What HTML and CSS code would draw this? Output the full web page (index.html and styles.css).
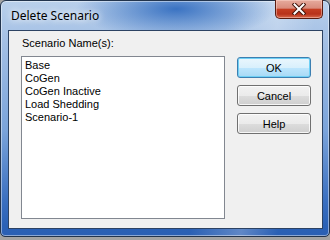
FILE: index.html
```html
<!DOCTYPE html>
<html lang="en">
<head>
  <meta charset="UTF-8" />
  <title>Delete Scenario</title>
  <link rel="stylesheet" href="styles.css">
</head>
<body>

  <!-- Janela do dialogo -->
  <div class="window">
    <div class="titlebar">
      <span class="title">Delete Scenario</span>
      <button class="close" type="button">
        <svg width="14" height="12" viewBox="0 0 14 12">
          <path d="M2.5 1.5 L11.5 10.5 M11.5 1.5 L2.5 10.5" stroke="#43150c" stroke-width="4" stroke-linecap="square" fill="none"/>
          <path d="M2.5 1.5 L11.5 10.5 M11.5 1.5 L2.5 10.5" stroke="#fff" stroke-width="2" stroke-linecap="square" fill="none"/>
        </svg>
      </button>
    </div>

    <div class="client">
      <div class="list-col">
        <label class="caption">Scenario Name(s):</label>
        <ul class="listbox">
          <li>Base</li>
          <li>CoGen</li>
          <li>CoGen Inactive</li>
          <li>Load Shedding</li>
          <li>Scenario-1</li>
        </ul>
      </div>

      <div class="buttons">
        <button class="btn default" type="button">OK</button>
        <button class="btn" type="button">Cancel</button>
        <button class="btn" type="button">Help</button>
      </div>
    </div>
  </div>

</body>
</html>
```

FILE: styles.css
```css
* { box-sizing: border-box; }
body {
  margin: 0;
  background: #a3a3a3;
  font-family: "Liberation Sans", Arial, sans-serif;
  font-size: 11px;
  color: #000;
}
.window {
  width: 330px;
  height: 237px;
  border: 1px solid #22344d;
  border-radius: 6px 6px 5px 5px;
  padding: 0 6px 7px 7px;
  display: flex;
  flex-direction: column;
  box-shadow: inset 0 0 0 1px rgba(255,255,255,0.45);
  background:
    radial-gradient(ellipse 100px 30px at 175px 8px, rgba(45,105,190,0.9), rgba(45,105,190,0)),
    linear-gradient(100deg, rgba(255,255,255,0) 62%, rgba(255,255,255,0.25) 76%, rgba(255,255,255,0) 86%),
    linear-gradient(to bottom, #b9d0eb 0px, #a4c0e5 40px, #7aa3da 130px, #3a6fc0 200px, #2a61b6 225px, #2a5fb3 100%);
}

/* Barra de titulo */
.titlebar {
  height: 29px;
  display: flex;
  justify-content: space-between;
  align-items: flex-start;
}
.title {
  margin: 6px 0 0 3px;
  font-family: "Noto Sans", sans-serif;
  font-size: 12px;
  color: #000;
  text-shadow: 0 0 6px #fff, 0 0 10px rgba(255,255,255,0.8);
}
.close {
  width: 48px;
  height: 19px;
  margin-top: -1px;
  border: 1px solid #5a1c10;
  border-top: none;
  border-radius: 0 0 5px 5px;
  padding: 0;
  display: flex;
  align-items: center;
  justify-content: center;
  background: linear-gradient(to bottom, #e6ab9d 0%, #d98c7c 45%, #c43d21 52%, #b8321a 78%, #d8694b 100%);
  box-shadow: inset 0 0 0 1px rgba(255,220,210,0.45);
}

/* Area cliente */
.client {
  flex: 1;
  display: flex;
  align-items: flex-start;
  border: 1px solid #2c4263;
  background: #f0f0f0;
  padding: 6px 0 0 12px;
}
.caption {
  display: block;
  margin-left: 1px;
  line-height: 13px;
}
.listbox {
  width: 204px;
  height: 163px;
  margin: 6px 0 0;
  padding: 2px 3px;
  list-style: none;
  background: #fff;
  border: 1px solid #828790;
}
.listbox li { line-height: 13px; }

.buttons {
  margin: 20px 0 0 12px;
  display: flex;
  flex-direction: column;
  gap: 7px;
}
.btn {
  width: 74px;
  height: 21px;
  padding: 0;
  font-family: "Liberation Sans", Arial, sans-serif;
  font-size: 11px;
  color: #000;
  border: 1px solid #707070;
  border-radius: 3px;
  background: linear-gradient(to bottom, #f2f2f2 0%, #ebebeb 50%, #dddddd 51%, #cfcfcf 100%);
  box-shadow: inset 0 0 0 1px rgba(255,255,255,0.8);
}
.btn.default {
  border-color: #3c7fb1;
  background: linear-gradient(to bottom, #eaf6fd 0%, #d9f0fc 50%, #bee6fd 51%, #a7d9f5 100%);
  box-shadow: inset 0 0 0 1px #6fd0f5;
}
```
